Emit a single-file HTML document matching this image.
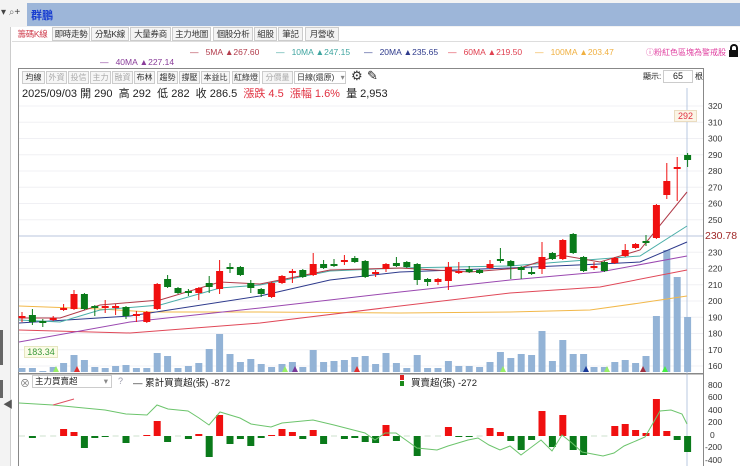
<!DOCTYPE html>
<html><head><meta charset="utf-8"><style>
*{margin:0;padding:0;box-sizing:border-box}
body{width:740px;height:466px;overflow:hidden;background:#fff;font-family:"Liberation Sans","Noto Sans CJK TC",sans-serif;position:relative;font-size:10px;color:#222}
.a{position:absolute;white-space:nowrap}
.tab{position:absolute;top:27px;height:14px;border:1px solid #ccc;background:#f4f4f4;font-size:8.5px;line-height:12px;text-align:center;color:#333;white-space:nowrap;overflow:hidden;letter-spacing:-0.3px}
.btn{position:absolute;top:71px;height:13px;border:1px solid #ccc;background:#f6f6f6;font-size:8px;line-height:11px;text-align:center;color:#333;white-space:nowrap;overflow:hidden}
.g{color:#aaa}
.lg{position:absolute;top:47px;font-size:8.5px;white-space:nowrap}
</style></head><body>
<div class="a" style="left:0;top:0;width:740px;height:27px;background:#f3f3f3"></div>
<div class="a" style="left:27px;top:3px;width:713px;height:23px;background:#9db6d9"></div>
<div class="a" style="left:1px;top:7px;font-size:10px;color:#444">▾ <span style="color:#777">⌕</span>+</div>
<div class="a" style="left:31px;top:7px;font-size:11px;font-weight:bold;color:#1a3fd0">群鵬</div>
<div class="a" style="left:0;top:27px;width:11px;height:439px;background:#f3f3f3;border-right:1px solid #ccc"></div>
<div class="a" style="left:0;top:330px;width:3px;height:35px;background:#666"></div>
<div class="a" style="left:0;top:380px;width:3px;height:18px;background:#666"></div>
<div class="a" style="left:3px;top:396px;font-size:10px;color:#555">◀</div>
<div class="tab" style="left:14px;width:37px;background:#fff;color:#d04050;border-color:#fff">籌碼K線</div>
<div class="tab" style="left:52px;width:38px">即時走勢</div>
<div class="tab" style="left:91px;width:38px">分點K線</div>
<div class="tab" style="left:130px;width:41px">大量券商</div>
<div class="tab" style="left:172px;width:39px">主力地圖</div>
<div class="tab" style="left:213px;width:40px">個股分析</div>
<div class="tab" style="left:254px;width:23px">組股</div>
<div class="tab" style="left:278px;width:25px">筆記</div>
<div class="tab" style="left:305px;width:34px">月營收</div>
<div class="a" style="left:12px;top:41px;width:728px;height:1px;background:#ddd"></div>
<div class="lg" style="left:190px;color:#b23c4c">—&nbsp;&nbsp; 5MA ▲267.60</div>
<div class="lg" style="left:276px;color:#3fa5a0">—&nbsp;&nbsp; 10MA ▲247.15</div>
<div class="lg" style="left:364px;color:#2e3a8c">—&nbsp;&nbsp; 20MA ▲235.65</div>
<div class="lg" style="left:448px;color:#e04050">—&nbsp;&nbsp; 60MA ▲219.50</div>
<div class="lg" style="left:535px;color:#f0b040">—&nbsp;&nbsp; 100MA ▲203.47</div>
<div class="a" style="top:47px;left:646px;font-size:8px;color:#e040a0">ⓘ粉紅色區塊為警戒股</div>
<div class="a" style="top:44px;left:730px;width:8px;height:7px;border:2px solid #111;border-bottom:none;border-radius:4px 4px 0 0"></div>
<div class="a" style="top:50px;left:729px;width:9px;height:7px;background:#111"></div>
<div class="lg" style="top:57px;left:100px;color:#8a3d9a">—&nbsp;&nbsp; 40MA ▲227.14</div>
<div class="a" style="left:18px;top:68px;width:686px;height:306px;border:1px solid #888"></div>
<div class="a" style="left:18px;top:374px;width:686px;height:92px;border-left:1px solid #888;border-right:1px solid #888"></div>
<div class="btn" style="left:22px;width:23px">均線</div>
<div class="btn g" style="left:46px;width:21px">外資</div>
<div class="btn g" style="left:68px;width:21px">投信</div>
<div class="btn g" style="left:90px;width:21px">主力</div>
<div class="btn g" style="left:112px;width:21px">融資</div>
<div class="btn" style="left:134px;width:21px">布林</div>
<div class="btn" style="left:157px;width:21px">趨勢</div>
<div class="btn" style="left:179px;width:21px">撐壓</div>
<div class="btn" style="left:201px;width:29px">本益比</div>
<div class="btn" style="left:232px;width:28px">紅綠燈</div>
<div class="btn g" style="left:262px;width:31px">分價量</div>
<div class="btn" style="left:294px;width:52px;background:#fff;text-align:left;padding-left:2px">日線(還原) <span style="color:#888;margin-left:4px">▾</span></div>
<div class="a" style="left:351px;top:68px;font-size:13px;color:#333">⚙</div>
<div class="a" style="left:367px;top:68px;font-size:13px;color:#222">✎</div>
<div class="a" style="left:643px;top:71px;font-size:8px">顯示:</div>
<div class="a" style="left:663px;top:70px;width:30px;height:13px;border:1px solid #ccc;font-size:9px;text-align:center;line-height:11px">65</div>
<div class="a" style="left:695px;top:71px;font-size:8px">根</div>
<div class="a" style="left:22px;top:85px;font-size:11px;color:#222">2025/09/03 開 290 &nbsp;高 292 &nbsp;低 282 &nbsp;收 286.5 &nbsp;<span style="color:#e03040">漲跌 4.5 &nbsp;漲幅 1.6%</span> &nbsp;量 2,953</div>
<svg class="a" style="left:0;top:0" width="740" height="466" id="s"></svg>
<div class="a" style="left:24px;top:346px;width:34px;height:12px;background:#fbfbe6;border:1px solid #e6e6c0;color:#3a9a3a;font-size:9px;text-align:center;line-height:10px">183.34</div>
<div class="a" style="left:674px;top:110px;width:23px;height:12px;background:#fbf5e6;border:1px solid #eadcc0;color:#e03040;font-size:9px;text-align:center;line-height:10px">292</div>
<div class="a" style="left:705px;top:230px;font-size:10.5px;color:#a02828;background:#fff">230.78</div>
<div class="a" style="left:20px;top:375px;font-size:10px;color:#777">⊗</div>
<div class="a" style="left:32px;top:375px;width:80px;height:13px;border:1px solid #ccc;font-size:8.5px;line-height:11px;padding-left:2px">主力買賣超<span style="float:right;color:#888;margin-right:3px">▾</span></div>
<div class="a" style="left:118px;top:376px;font-size:9px;color:#99a">?</div>
<div class="a" style="left:133px;top:375px;font-size:9.5px">— 累計買賣超(張) -872</div>
<div class="a" style="left:400px;top:375px;width:4px;height:5px;background:#e02020"></div>
<div class="a" style="left:400px;top:381px;width:4px;height:5px;background:#1a8a1a"></div>
<div class="a" style="left:411px;top:375px;font-size:9.5px">買賣超(張) -272</div>
<script>
var s=document.getElementById('s'),h='';
function L(x1,y1,x2,y2,c,w){h+='<line x1="'+x1+'" y1="'+y1+'" x2="'+x2+'" y2="'+y2+'" stroke="'+c+'" stroke-width="'+(w||1)+'"/>';}
function R(x,y,w,hh,c){h+='<rect x="'+x+'" y="'+y+'" width="'+w+'" height="'+Math.max(hh,1)+'" fill="'+c+'"/>';}
function T(x,y,t){h+='<text x="'+x+'" y="'+y+'" font-size="8.5" fill="#333" font-family="Liberation Sans">'+t+'</text>';}
for(var p=160;p<=320;p+=10){var y=106+(320-p)*1.625;L(19,y,703,y,'#f0f0f4');if(p!=240)T(708,y+3,p);}
L(19,236,703,236,'#b8c4dc');L(687,88,687,466,'#b8c8e0');
var V=[368,368,371,367,363,355,360,367,368,366,365,368,368,353,356,368,366,363,349,334,354,362,359,364,367,364,362,367,350,362,361,360,357,356,364,353,363,368,355,368,368,361,366,366,367,362,352,358,354,355,331,361,340,354,354,367,367,362,360,363,356,316,250,277,317];
var X=function(i){return 22+10.4*i};
V.forEach(function(v,i){R(X(i)-3.5,v,7,372-v,'#93b3d6')});
var C=[[316,318,312,322,1],[315,322,309,325,0],[321,323,319,327,0],[318,320,316,321,1],[308,310,304,311,1],[294,309,290,310,1],[294,309,293,310,0],[306,308,305,316,0],[306,308,300,313,1],[306,308,304,315,1],[307,316,306,319,0],[314,316,311,322,1],[312,322,311,323,1],[284,309,283,310,1],[279,287,275,288,0],[288,293,287,294,0],[291,293,289,296,0],[288,293,287,300,1],[283,287,276,293,0],[271,289,260,294,1],[267,269,263,273,0],[267,275,266,276,0],[283,288,280,293,0],[289,294,288,297,0],[283,297,282,298,1],[276,283,275,284,1],[271,273,269,283,1],[270,277,269,278,0],[264,275,253,276,1],[264,268,260,269,0],[264,266,259,267,0],[260,262,255,265,1],[258,262,256,263,0],[261,277,260,278,0],[272,274,270,277,1],[264,269,263,272,1],[263,266,257,267,0],[262,267,261,268,0],[264,280,263,285,0],[279,282,278,286,0],[279,282,278,285,1],[267,281,262,290,1],[271,273,262,274,1],[269,272,266,273,0],[270,273,269,274,0],[264,268,260,269,1],[259,261,248,263,0],[261,266,260,279,0],[267,270,266,279,0],[272,274,267,275,0],[257,269,242,274,1],[253,259,252,260,0],[240,259,239,260,1],[234,253,233,254,0],[257,271,256,272,0],[266,268,262,270,1],[262,271,261,272,0],[258,263,257,264,1],[250,256,244,257,1],[244,248,243,249,1],[241,243,235,246,0],[205,238,204,239,1],[181,195,163,199,1],[167,169,157,201,1],[155,160,153,167,0]];
function P(pts,c){h+='<polyline fill="none" stroke="'+c+'" stroke-width="1" points="'+pts+'"/>';}
P('19,306 100,309 150,312 260,312 400,313 510,312 590,310 640,303 687,296','#f2b84a');
P('19,330 130,333 260,323 400,306 510,293 600,287 687,270','#e04858');
P('19,342 130,322 260,308 400,292 510,280 600,272 687,256','#9a48b0');
P('19,323 130,316 260,296 330,280 400,272 510,268 600,264 640,262 687,242','#2e3a8c');
P('19,320 60,322 100,310 160,305 220,288 260,285 330,271 400,268 510,266 560,262 640,256 687,226','#4aaea8');
P('19,318 60,318 100,305 160,300 220,282 260,284 330,270 400,268 470,272 520,268 560,255 600,262 640,250 687,192','#b03a48');
C.forEach(function(c,i){var x=X(i),col=c[4]?'#f01010':'#0a7a1a';L(x,c[2],x,c[3],col);R(x-3.5,c[0],7,c[1]-c[0],col);});
var B=[0,-2,0,0,7,4,-12,-2,-1,0,-7,0,1,15,-6,0,-3,2,-21,21,-8,-3,-10,-2,1,7,4,-3,6,-8,0,-3,-2,-6,-7,11,-5,0,-20,0,0,9,-1,-1,0,8,4,-5,-14,-4,25,-11,21,-14,-19,0,0,10,12,6,3,37,5,-4,-16];
B.forEach(function(b,i){var x=X(i);if(b==0){L(x-3,436,x+3,436,'#cde0cd');return;}if(b>0)R(x-3.5,436-b,7,b,'#f01010');else R(x-3.5,436,7,-b,'#0a7a1a');});
P('19,403 53,405 84,408 105,410 126,414 147,415 157,405 168,409 188,411 199,418 209,425 220,412 240,418 251,424 271,427 282,423 313,420 334,425 365,433 375,440 385,433 396,433 417,448 437,450 448,446 468,440 478,438 489,445 500,450 510,446 521,455 541,440 552,451 562,435 572,443 582,452 603,456 614,453 624,446 645,437 660,411 671,410 682,414 687,424','#6cc46c');
P('53,405 74,399','#e05060');
[[800,385],[600,397],[400,410],[200,422],[0,435],[-200,447],[-400,460]].forEach(function(a){T(a[0]<0?705:(a[0]==0?710:708),a[1]+3,a[0]);});
h+='<polygon points="53,372 56,366 59,372" fill="#9e6"/><polygon points="74,372 77,366 80,372" fill="#e03030"/><polygon points="282,372 285,366 288,372" fill="#9e6"/><polygon points="292,372 295,366 298,372" fill="#7a3a9a"/><polygon points="354,372 357,366 360,372" fill="#e03030"/><polygon points="500,372 503,366 506,372" fill="#9e6"/><polygon points="583,372 586,366 589,372" fill="#1a3a9a"/><polygon points="604,372 607,366 610,372" fill="#9e6"/><polygon points="640,372 643,366 646,372" fill="#a03040"/><polygon points="662,372 665,366 668,372" fill="#4e4"/>';
L(18,374,704,374,'#888');
s.innerHTML=h;
</script>
</body></html>
